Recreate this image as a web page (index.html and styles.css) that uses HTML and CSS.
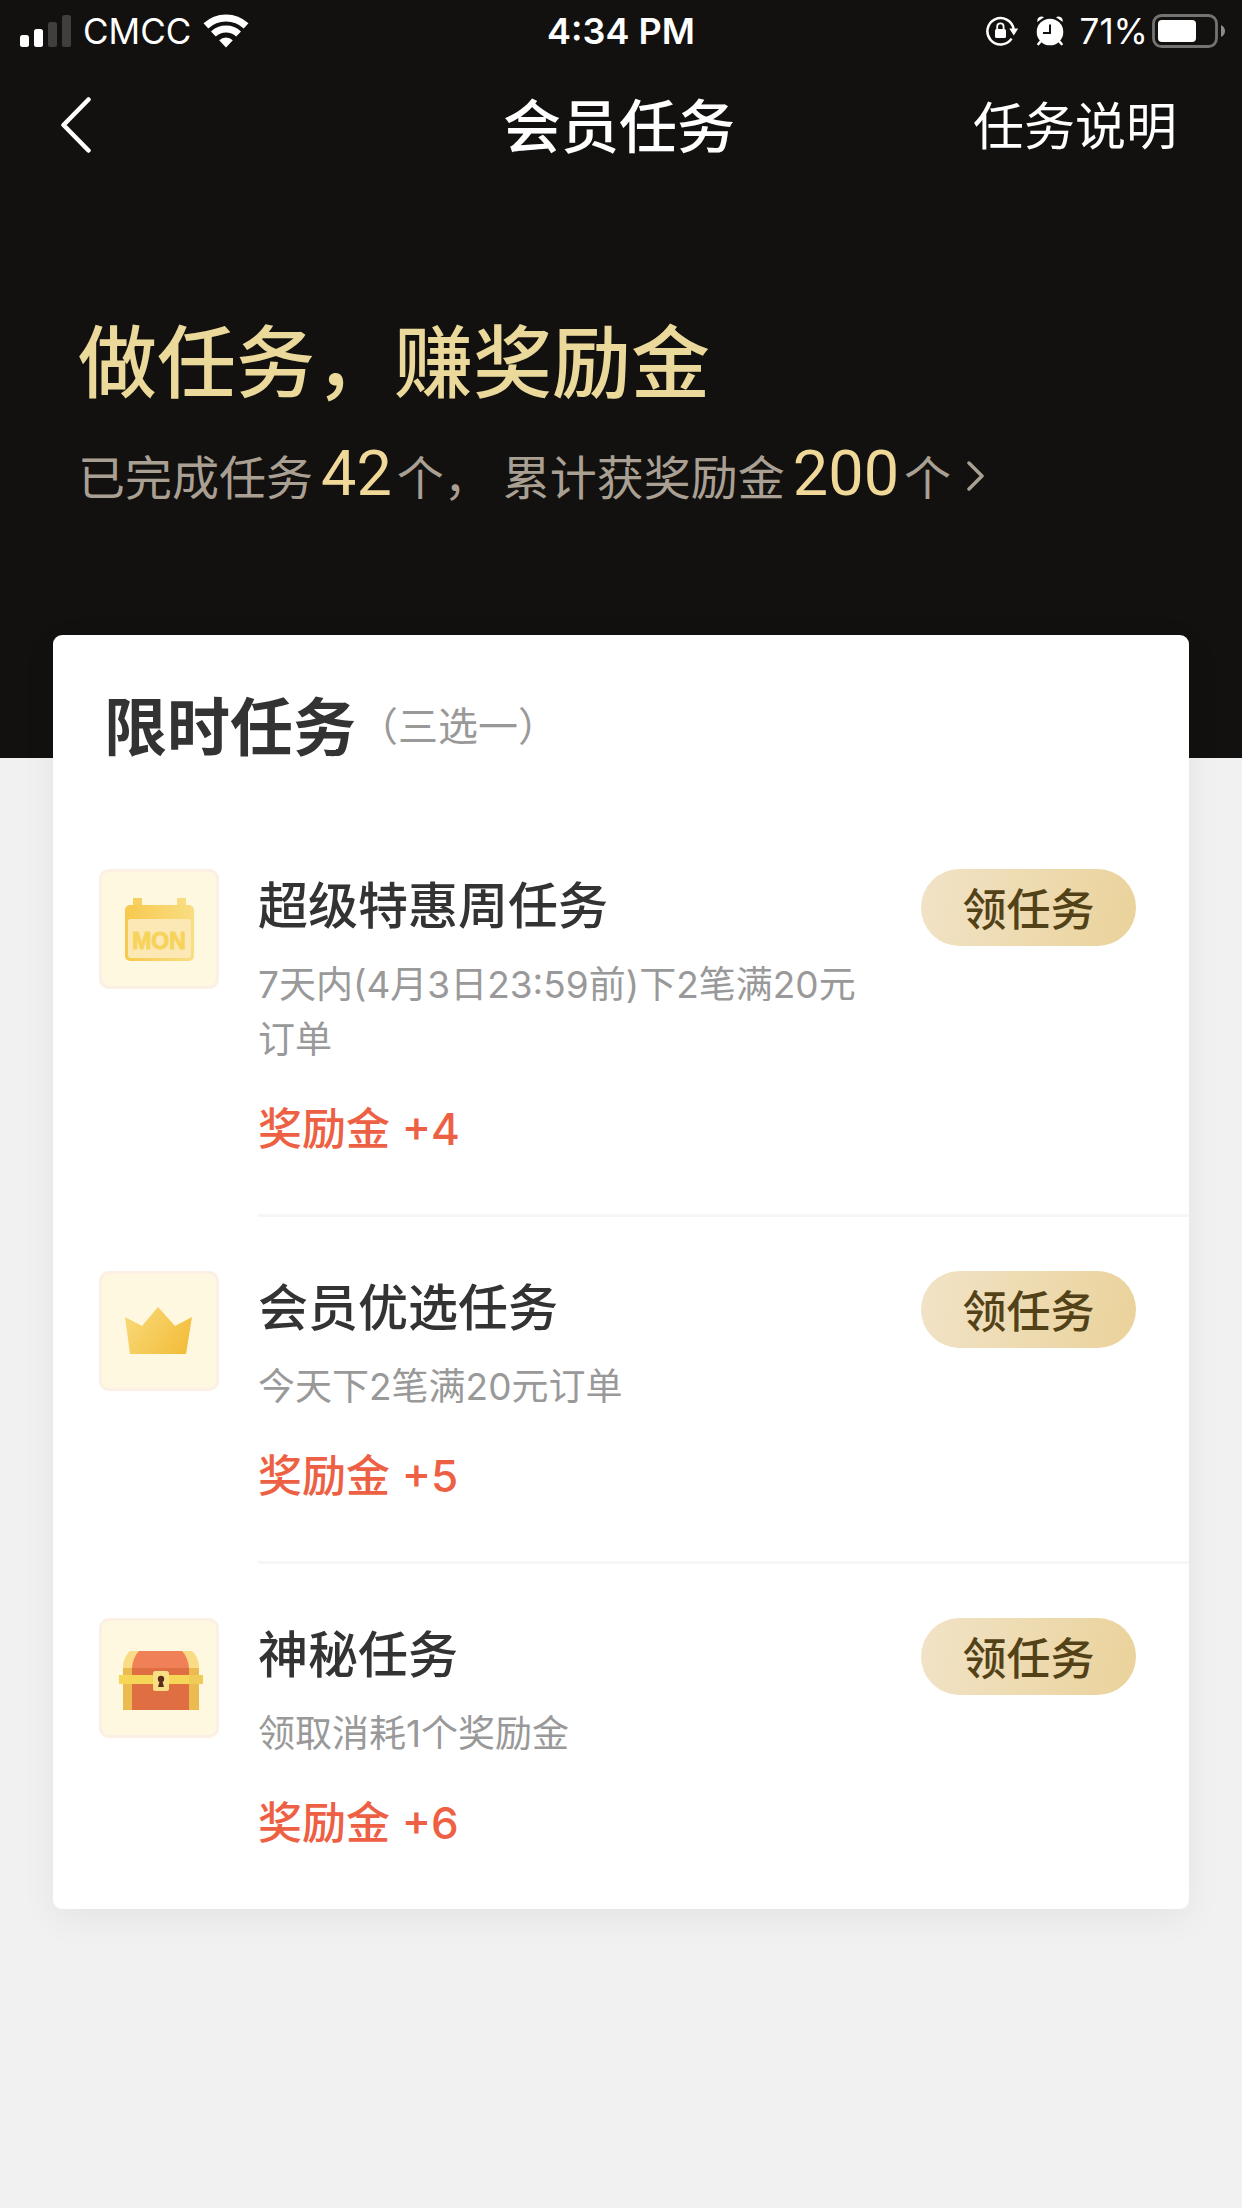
FILE: index.html
```html
<!DOCTYPE html>
<html lang="zh-CN">
<head>
<meta charset="utf-8">
<meta name="viewport" content="width=device-width, initial-scale=1">
<title>会员任务</title>
<link rel="stylesheet" href="styles.css">
</head>
<body>
<header class="hero">
  <div class="status">
    <div class="status-left">
      <svg width="51" height="32" viewBox="0 0 51 32" fill="#fff" aria-hidden="true">
        <rect x="0" y="20" width="9" height="12" rx="2.5"/>
        <rect x="14" y="14" width="9" height="18" rx="2.5"/>
        <rect x="28" y="7" width="9" height="25" rx="2.5" fill="#413f3d"/>
        <rect x="42" y="0" width="9" height="32" rx="2.5" fill="#413f3d"/>
      </svg>
      <span class="carrier">CMCC</span>
      <svg width="46" height="34" viewBox="0 0 46 34" aria-hidden="true">
        <g fill="none" stroke="#fff" stroke-width="7">
          <path d="M2.9 11.9A29.5 29.5 0 0 1 43.1 11.9"/>
          <path d="M10.4 20A18.5 18.5 0 0 1 35.6 20"/>
        </g>
        <path d="M23 33.5L16.2 26.2A10 10 0 0 1 29.8 26.2Z" fill="#fff"/>
      </svg>
    </div>
    <time class="clock">4:34 PM</time>
    <div class="status-right">
      <svg width="33" height="32" viewBox="0 0 33 32" aria-hidden="true">
        <path d="M25.6 23.6A13.2 13.2 0 1 1 27.6 14" fill="none" stroke="#fff" stroke-width="2.5"/>
        <path d="M23.3 13.5H32.2L27.8 20.5Z" fill="#fff"/>
        <rect x="9" y="14" width="11" height="9" rx="1.5" fill="#fff"/>
        <path d="M11.2 15V11.6A3.2 3.2 0 0 1 17.6 11.6V15" fill="none" stroke="#fff" stroke-width="1.8"/>
      </svg>
      <svg class="alarm" width="28" height="32" viewBox="0 0 28 32" aria-hidden="true">
        <circle cx="14" cy="17" r="13.3" fill="#fff"/>
        <g stroke="#fff" stroke-width="2.6" stroke-linecap="round">
          <path d="M5 26L2.4 29M23 26L25.6 29"/>
        </g>
        <path d="M1.2 7A4.5 4.5 0 0 1 8 2.2ZM26.8 7A4.5 4.5 0 0 0 20 2.2Z" fill="#fff"/>
        <path d="M14 9.5V18H7" fill="none" stroke="#12110f" stroke-width="2"/>
      </svg>
      <span class="percent">71%</span>
      <svg width="74" height="34" viewBox="0 0 74 34" aria-hidden="true">
        <rect x="1.5" y="1.5" width="63" height="31" rx="8" fill="none" stroke="#757371" stroke-width="2.8"/>
        <rect x="6" y="6" width="38" height="22" rx="4" fill="#fff"/>
        <path d="M69 11Q73 13 73 17T69 23Z" fill="#8c8b8a"/>
      </svg>
    </div>
  </div>
  <nav class="nav">
    <a class="back" href="#" aria-label="返回">
      <svg width="30" height="56" viewBox="0 0 30 56" fill="none" stroke="#fff" stroke-width="4.5" stroke-linecap="round" stroke-linejoin="round" aria-hidden="true"><path d="M27.5 2.5L2.5 28L27.5 53.5"/></svg>
    </a>
    <h1 class="nav-title">会员任务</h1>
    <a class="rules" href="#">任务说明</a>
  </nav>
  <h2 class="headline">做任务，赚奖励金</h2>
  <a class="summary" href="#">
    <span>已完成任务</span><b class="count">42</b><span>个，</span><span class="earned">累计获奖励金</span><b class="count">200</b><span>个</span>
    <svg class="more" width="18" height="30" viewBox="0 0 18 30" fill="none" stroke="#a9a093" stroke-width="3.5" stroke-linecap="round" stroke-linejoin="round" aria-hidden="true"><path d="M2 2L15 15L2 28"/></svg>
  </a>
</header>
<main class="card">
  <div class="card-head">
    <h2 class="card-title">限时任务</h2><span class="card-note">（三选一）</span>
  </div>
  <ul class="tasks">
    <li class="task">
      <svg class="icon" width="120" height="120" viewBox="0 0 120 120" aria-hidden="true">
        <defs>
          <linearGradient id="cal" x1="0" x2="1"><stop offset="0" stop-color="#f7c94d"/><stop offset="1" stop-color="#f9dd83"/></linearGradient>
        </defs>
        <rect x="34" y="29" width="9" height="10" fill="#f7d063"/>
        <rect x="78" y="29" width="9" height="10" fill="#f9dc80"/>
        <rect x="26" y="36" width="69" height="56" rx="5" fill="url(#cal)"/>
        <rect x="29" y="50" width="63" height="39" rx="3" fill="#fce8b5"/>
        <text class="day" x="60" y="80" text-anchor="middle">MON</text>
      </svg>
      <div class="body">
        <h3 class="name">超级特惠周任务</h3>
        <p class="desc">7天内(4月3日23:59前)下2笔满20元订单</p>
        <p class="reward">奖励金 +4</p>
      </div>
      <button class="claim" type="button">领任务</button>
    </li>
    <li class="task">
      <svg class="icon" width="120" height="120" viewBox="0 0 120 120" aria-hidden="true">
        <defs>
          <linearGradient id="crown" x1="0" y1="0.2" x2="1" y2="0.7"><stop offset="0" stop-color="#f8d978"/><stop offset="1" stop-color="#f3be3c"/></linearGradient>
        </defs>
        <path d="M26 46L43 55L59 36L76 55L93 46L87 83H31Z" fill="url(#crown)"/>
      </svg>
      <div class="body">
        <h3 class="name">会员优选任务</h3>
        <p class="desc">今天下2笔满20元订单</p>
        <p class="reward">奖励金 +5</p>
      </div>
      <button class="claim" type="button">领任务</button>
    </li>
    <li class="task">
      <svg class="icon" width="120" height="120" viewBox="0 0 120 120" aria-hidden="true">
        <path d="M24 57V50Q24 39 31 33H93Q100 39 100 50V57Z" fill="#f9dc85"/>
        <path d="M33 57V50Q34 39 40 33H83Q89 39 90 50V57Z" fill="#ef8057"/>
        <path d="M24 50H100V57H24Z" fill="#ebbb52"/>
        <path d="M33 50H90V57H33Z" fill="#df6e43"/>
        <path d="M24 65H100V92H24Z" fill="#ebbb52"/>
        <path d="M33 65H90V92H33Z" fill="#df6e43"/>
        <path d="M20 57H104V66H20Z" fill="#f5d657"/>
        <path d="M90 57H104V66H90Z" fill="#efcb58"/>
        <rect x="54" y="53" width="16" height="20" rx="2.5" fill="#f9df84"/>
        <circle cx="62" cy="61" r="3.2" fill="#5b2a1e"/>
        <path d="M61 62H63L65 69H59Z" fill="#5b2a1e"/>
      </svg>
      <div class="body">
        <h3 class="name">神秘任务</h3>
        <p class="desc">领取消耗1个奖励金</p>
        <p class="reward">奖励金 +6</p>
      </div>
      <button class="claim" type="button">领任务</button>
    </li>
  </ul>
</main>
</body>
</html>
```
FILE: styles.css
```css
* {
  box-sizing: border-box;
}

body {
  margin: 0;
  background: #f1f1f1;
  color: #333;
  font-family: Inter, "Noto Sans CJK SC", sans-serif;
}

h1, h2, h3, p, ul {
  margin: 0;
  padding: 0;
}

a {
  color: inherit;
  text-decoration: none;
}

svg {
  display: block;
  flex: none;
}

.hero {
  background: #12110f;
  color: #fff;
  padding-bottom: 242px;
}

/* Status bar */
.status {
  display: grid;
  grid-template-columns: 1fr auto 1fr;
  align-items: center;
  height: 62px;
  padding: 0 16px;
  font-size: 35px;
  line-height: 62px;
}

.status-left,
.status-right {
  display: flex;
  align-items: center;
}

.status-left {
  padding-left: 4px;
}

.status-right {
  justify-content: flex-end;
}

.carrier {
  margin: 0 12px;
}

.clock {
  font-size: 36px;
  font-weight: 600;
}

.alarm {
  margin: 0 16px 0 17px;
}

.percent {
  margin-right: 4px;
}

/* Navigation bar */
.nav {
  display: grid;
  grid-template-columns: 1fr auto 1fr;
  align-items: center;
  height: 130px;
  padding: 0 65px 0 61px;
}

.back {
  padding-bottom: 4px;
}

.nav-title {
  font-size: 58px;
  font-weight: 500;
  line-height: 84px;
}

.rules {
  justify-self: end;
  font-size: 51px;
  line-height: 84px;
}

.headline {
  padding: 113px 78px 0;
  color: #ead99a;
  font-size: 79px;
  font-weight: 500;
  line-height: 116px;
}

.summary {
  display: flex;
  align-items: baseline;
  padding: 15px 78px 0;
  color: #a9a093;
  font-size: 47px;
  line-height: 76px;
}

.count {
  margin: 0 5px 0 8px;
  color: #f0d898;
  font: 400 63px/76px Roboto, sans-serif;
}

.earned {
  margin-left: 12px;
}

.more {
  align-self: center;
  margin-left: 16px;
}

/* Task card */
.card {
  margin: -123px 53px 60px;
  border-radius: 9px;
  background: #fff;
  box-shadow: 0 9px 36px rgba(0, 0, 0, 0.06);
}

.card-head {
  display: flex;
  align-items: center;
  padding: 46px 51px 0;
  line-height: 92px;
}

.card-title {
  font-size: 63px;
  font-weight: 600;
}

.card-note {
  margin-left: 2px;
  color: #999;
  font-size: 40px;
}

.tasks {
  padding-top: 42px;
  list-style: none;
}

.task {
  display: flex;
  align-items: flex-start;
  padding: 54px 53px 0 46px;
}

.icon {
  border-radius: 10px;
  background: #fef8e1;
  box-shadow: inset 0 0 0 3px #fbf0e3;
}

.day {
  fill: #f7d35c;
  stroke: #f7d35c;
  font: bold 23px "Liberation Sans", sans-serif;
}

.body {
  flex: 1;
  margin-left: 39px;
  padding-bottom: 56px;
}

.name {
  font-size: 50px;
  font-weight: 500;
  line-height: 74px;
}

.desc {
  margin-top: 14px;
  color: #999;
  font-size: 37px;
  line-height: 55px;
}

.reward {
  margin-top: 32px;
  color: #ee6044;
  font-size: 44px;
  font-weight: 500;
  line-height: 60px;
}

.claim {
  width: 215px;
  height: 77px;
  margin-left: 60px;
  padding: 0;
  border: 0;
  border-radius: 39px;
  background: linear-gradient(100deg, #f1e3c7, #ead29a);
  color: #534217;
  font: 500 44px/75px "Noto Sans CJK SC", sans-serif;
}

/* The divider starts at the text column and runs to the card's edge */
.task:not(:last-child) {
  background: linear-gradient(#f6f6f6, #f6f6f6) 205px 100% / 100% 3px no-repeat;
  padding-bottom: 2px;
}
```
